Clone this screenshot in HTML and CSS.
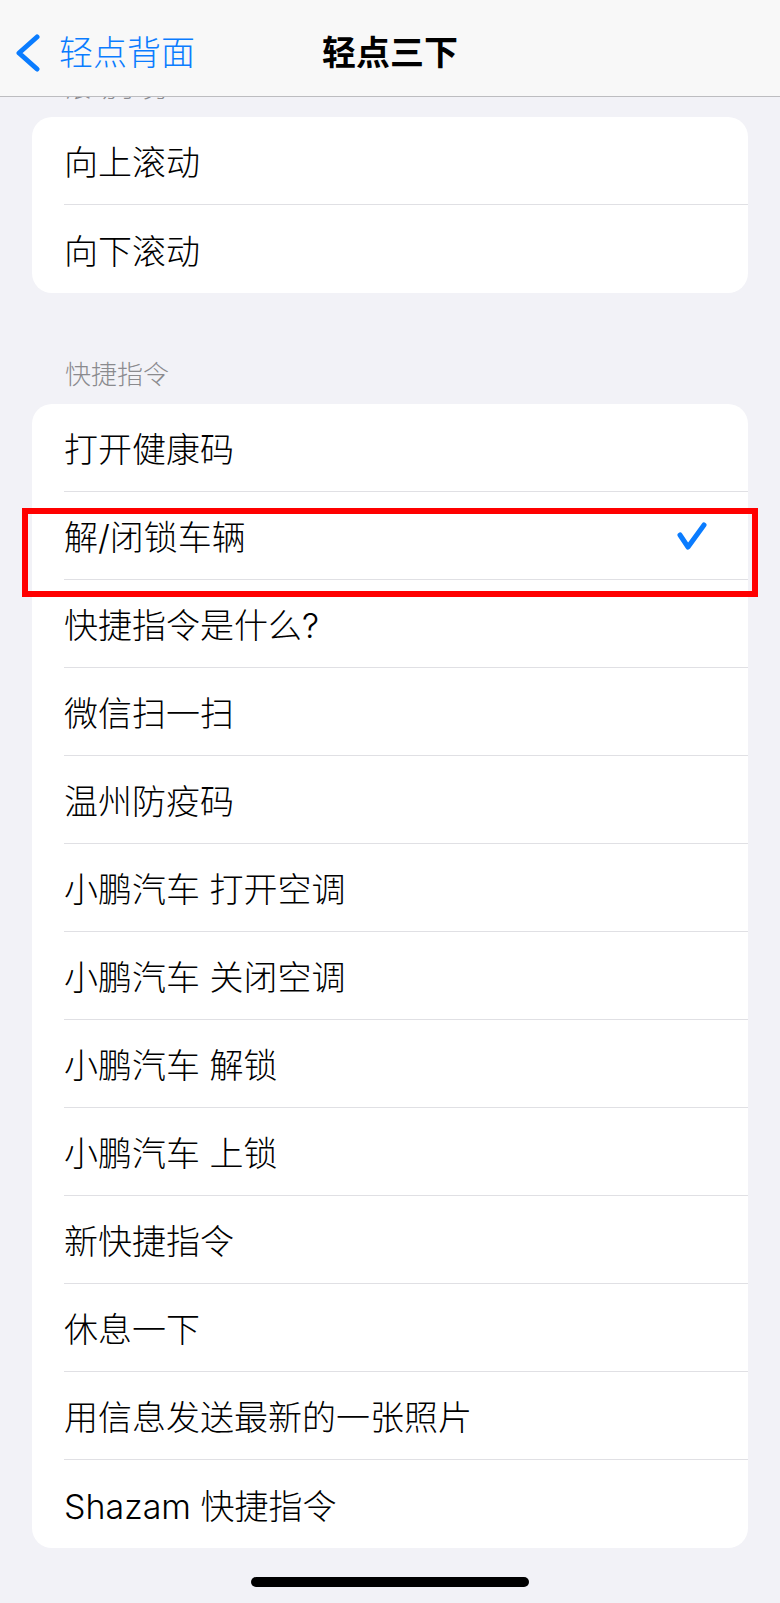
FILE: index.html
```html
<!DOCTYPE html>
<html lang="zh-CN">
<head>
<meta charset="utf-8">
<title>轻点三下</title>
<link rel="stylesheet" href="styles.css">
</head>
<body>
<header class="nav">
  <div class="nav-back">
    <svg class="chev" width="24" height="38" viewBox="0 0 24 38"><path d="M21 3 L3 19 L21 35" fill="none" stroke="#0a7cff" stroke-width="5" stroke-linecap="round" stroke-linejoin="round"/></svg>
    <span>轻点背面</span>
  </div>
  <div class="nav-title">轻点三下</div>
  <div></div>
</header>
<main class="content">
  <div class="sec-head">滚动手势</div>
  <div class="card">
    <div class="row"><div class="row-in">向上滚动</div></div>
    <div class="row"><div class="row-in">向下滚动</div></div>
  </div>
  <div class="sec-head sec-gap">快捷指令</div>
  <div class="card">
    <div class="row"><div class="row-in">打开健康码</div></div>
    <div class="row sel">
      <div class="row-in">解/闭锁车辆
        <svg class="check" width="32" height="30" viewBox="0 0 32 30"><path d="M4 14 L12 26 L28 4" fill="none" stroke="#0a7cff" stroke-width="5" stroke-linecap="round" stroke-linejoin="round"/></svg>
      </div>
      <div class="mark"></div>
    </div>
    <div class="row"><div class="row-in">快捷指令是什么?</div></div>
    <div class="row"><div class="row-in">微信扫一扫</div></div>
    <div class="row"><div class="row-in">温州防疫码</div></div>
    <div class="row"><div class="row-in">小鹏汽车 打开空调</div></div>
    <div class="row"><div class="row-in">小鹏汽车 关闭空调</div></div>
    <div class="row"><div class="row-in">小鹏汽车 解锁</div></div>
    <div class="row"><div class="row-in">小鹏汽车 上锁</div></div>
    <div class="row"><div class="row-in">新快捷指令</div></div>
    <div class="row"><div class="row-in">休息一下</div></div>
    <div class="row"><div class="row-in">用信息发送最新的一张照片</div></div>
    <div class="row"><div class="row-in">Shazam 快捷指令</div></div>
  </div>
  <div class="home-bar"></div>
</main>
</body>
</html>
```

FILE: styles.css
```css
html, body {
  margin: 0;
  padding: 0;
}
body {
  background: #f2f2f7;
  font-family: Inter, "Noto Sans CJK SC", sans-serif;
  font-weight: 300;
  color: #000;
  width: 780px;
  height: 1603px;
  overflow: hidden;
}
.nav {
  position: fixed;
  top: 0;
  left: 0;
  right: 0;
  z-index: 10;
  height: 97px;
  box-sizing: border-box;
  padding-top: 9px;
  background: #f8f8f8;
  border-bottom: 1px solid #bdbdc0;
  display: grid;
  grid-template-columns: 1fr auto 1fr;
  align-items: center;
}
.nav-back {
  display: flex;
  align-items: center;
  padding-left: 16px;
  color: #0a7cff;
  font-size: 34px;
  line-height: 40px;
}
.chev {
  display: block;
  margin-right: 19px;
}
.nav-title {
  font-size: 34px;
  line-height: 40px;
  font-weight: 700;
}
.content {
  padding: 72px 32px 0;
}
.sec-head {
  height: 32px;
  line-height: 32px;
  font-size: 26px;
  color: #8a8a8e;
  padding-left: 33px;
  margin-bottom: 13px;
}
.sec-gap {
  margin-top: 66px;
}
.card {
  background: #fff;
  border-radius: 20px;
}
.row {
  padding-left: 32px;
  position: relative;
}
.row-in {
  height: 88px;
  box-sizing: border-box;
  border-bottom: 1px solid #e0e0e4;
  display: flex;
  align-items: center;
  font-size: 34px;
  padding-right: 40px;
}
.row:last-child .row-in {
  border-bottom: none;
}
.check {
  margin-left: auto;
  display: block;
}
.mark {
  position: absolute;
  top: 16px;
  bottom: -17px;
  left: -10px;
  right: -10px;
  border: 6px solid #ff0000;
  pointer-events: none;
}
.home-bar {
  width: 278px;
  height: 10px;
  border-radius: 5px;
  background: #000;
  margin: 29px auto 0;
}
```
